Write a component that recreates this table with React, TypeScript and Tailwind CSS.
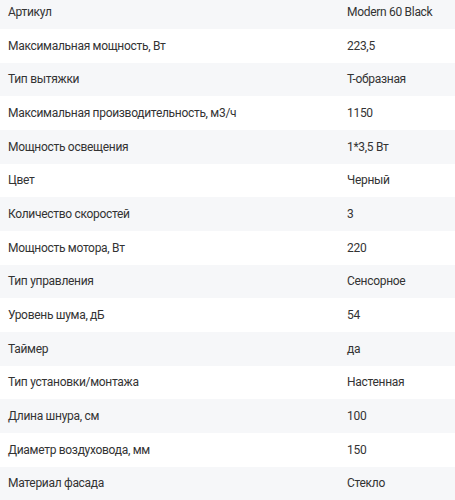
import React from "react";

const specs: [string, string][] = [
  ["Артикул", "Modern 60 Black"],
  ["Максимальная мощность, Вт", "223,5"],
  ["Тип вытяжки", "Т-образная"],
  ["Максимальная производительность, м3/ч", "1150"],
  ["Мощность освещения", "1*3,5 Вт"],
  ["Цвет", "Черный"],
  ["Количество скоростей", "3"],
  ["Мощность мотора, Вт", "220"],
  ["Тип управления", "Сенсорное"],
  ["Уровень шума, дБ", "54"],
  ["Таймер", "да"],
  ["Тип установки/монтажа", "Настенная"],
  ["Длина шнура, см", "100"],
  ["Диаметр воздуховода, мм", "150"],
  ["Материал фасада", "Стекло"],
];

export default function App() {
  return (
    <div className="w-[455px] h-[500px] overflow-hidden bg-white font-['Roboto',sans-serif] text-[12px] tracking-[-0.3px] text-[#333]">
      <ul className="-mt-[4.67px]">
        {specs.map(([label, value], i) => (
          <li
            key={label}
            className={`grid grid-cols-[339px_1fr] h-[33.67px] items-center whitespace-nowrap ${
              i % 2 === 0 ? "bg-[#f6f7f9]" : "bg-white"
            }`}
          >
            <span className="px-2">{label}</span>
            <span className="px-2">{value}</span>
          </li>
        ))}
      </ul>
    </div>
  );
}
